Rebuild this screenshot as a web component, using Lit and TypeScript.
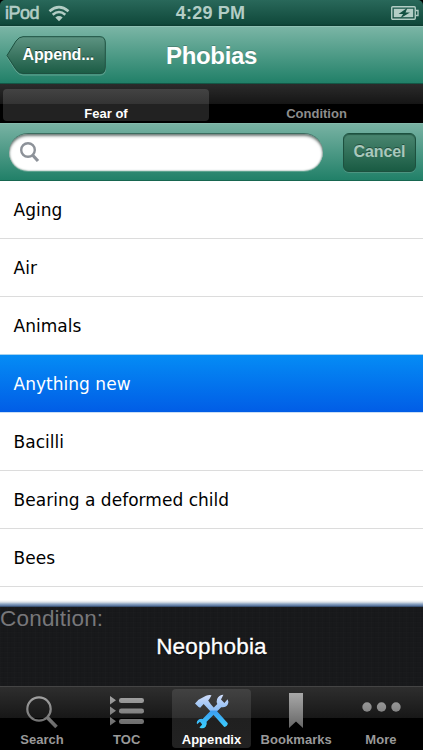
import { LitElement, html, css, svg } from "lit";
import { customElement, property } from "lit/decorators.js";
import { classMap } from "lit/directives/class-map.js";

@customElement("status-bar")
class StatusBar extends LitElement {
  static styles = css`
    :host { display: grid; grid-template-columns: 1fr auto 1fr; align-items: center; height: 26px; box-sizing: border-box;
      padding: 0 4px 0 5px; color: #b3cdc5; background: linear-gradient(#29685a, #10493b 92%, #0b3a2f);
      font: bold 18px/26px "Liberation Sans", sans-serif; }
    .left { display: flex; align-items: center; gap: 9px; }
    .device { letter-spacing: -0.5px; font-weight: normal; -webkit-text-stroke: 0.6px #b3cdc5; }
    .time { letter-spacing: 0.2px; margin-right: 3px; }
    .right { display: flex; justify-content: flex-end; }
    svg { display: block; }
  `;
  render() {
    return html`
      <div class="left"><span class="device">iPod</span>
        <svg width="22" height="18" viewBox="0 0 22 18" fill="none" stroke="#b3cdc5" stroke-width="2.6">
          <path d="M1.5 7.2Q11-.8 20.5 7.2M4.7 10.8Q11 5.2 17.3 10.8" />
          <path d="M11 17.2L7.3 13.4Q11 10.5 14.7 13.4Z" fill="#b3cdc5" stroke="none" />
        </svg>
      </div>
      <div class="time">4:29 PM</div>
      <div class="right">
        <svg width="28" height="15" viewBox="0 0 28 15">
          <rect x=".75" y=".75" width="23.5" height="12.5" rx="1" fill="none" stroke="#b3cdc5" stroke-width="1.4" />
          <path d="M25 4.5h2v5h-2" fill="none" stroke="#b3cdc5" stroke-width="1.3" />
          <rect x="2.8" y="2.8" width="19.4" height="8.4" fill="#b3cdc5" />
          <path d="M16.5 1.8L7.5 8h4.6l-2.8 4.3L19 6.4h-4.5Z" fill="#145042" />
        </svg>
      </div>`;
  }
}

@customElement("nav-header")
class NavHeader extends LitElement {
  static styles = css`
    :host { display: grid; grid-template-columns: 100px 1fr 100px; height: 58px; box-sizing: border-box; padding: 9px 6px 0 6px;
      background: linear-gradient(#7ab5a5, #218068); border-top: 1px solid #8fc2b4; border-bottom: 1px solid #145746;
      font-family: "Liberation Sans", sans-serif; font-weight: bold; color: #fff; }
    .back { display: grid; width: 100px; height: 40px; }
    .back > * { grid-area: 1 / 1; }
    .label { font-size: 16px; line-height: 38px; padding-left: 16.5px; letter-spacing: -0.15px; text-shadow: 0 -1px 0 #183e31; white-space: nowrap; }
    .title { text-align: center; font-size: 24px; line-height: 40px; letter-spacing: -0.35px; text-shadow: 0 -1px 0 #4c8476; }
  `;
  render() {
    return html`
      <div class="back">
        <svg width="101" height="40" viewBox="0 0 101 40">
          <defs><linearGradient id="g" x2="0" y2="1"><stop stop-color="#5d9482" /><stop offset=".5" stop-color="#3c7662" /><stop offset="1" stop-color="#1b5c45" /></linearGradient></defs>
          <path d="M17 2H94Q99.5 2 99.5 8V33Q99.5 39 94 39H17Q13 39 10 35L1 21L10 6Q13 2 17 2Z" fill="none" stroke="#65a391" />
          <path d="M17 .7H94Q99.3 .7 99.3 7V31Q99.3 37.5 94 37.5H17Q13 37.5 10 33.5L1 19.5L10 5Q13 .7 17 .7Z" fill="url(#g)" stroke="#1d5140" />
        </svg>
        <span class="label">Append...</span>
      </div>
      <div class="title">Phobias</div>`;
  }
}

@customElement("scope-bar")
class ScopeBar extends LitElement {
  static styles = css`
    :host { display: grid; grid-template-columns: 206px 1fr; gap: 3px; height: 39px; box-sizing: border-box; padding: 5px 2px 3px 3px;
      background: linear-gradient(#2b2b2b 0, #151515 20px, #000 20px);
      font: bold 13px/15px "Liberation Sans", sans-serif; letter-spacing: 0; color: #8d8d8d; text-align: center; }
    .seg { padding-top: 16.5px; border-radius: 4px; }
    .on { color: #fff; background: linear-gradient(#434343 0, #343434 15px, #222 15px, #222); }
  `;
  render() {
    return html`<div class="seg on">Fear of</div><div class="seg">Condition</div>`;
  }
}

@customElement("search-strip")
class SearchStrip extends LitElement {
  static styles = css`
    :host { display: flex; justify-content: space-between; height: 58px; box-sizing: border-box; padding: 9px 7px 0 9px;
      border-top: 1px solid #84b9ab; border-bottom: 1px solid #176650;
      background: linear-gradient(#78b2a3, #218068); font-family: "Liberation Sans", sans-serif; }
    .field { width: 314px; height: 38px; box-sizing: border-box; border-radius: 19px; background: #fff; padding: 8px 11px;
      box-shadow: inset 0 2px 3px #707b78, inset 0 0 2px #6d9186, 0 1px 0 #5ca28e; border-top: 1px solid #3c6d60; }
    .cancel { width: 73px; height: 39px; box-sizing: border-box; border-radius: 6px; border: 1px solid #1d513f; text-align: center;
      background: linear-gradient(#4a8670, #195b43); color: #a9c8bc; font-weight: bold; font-size: 16px; line-height: 36px;
      letter-spacing: -0.1px; text-shadow: 0 -1px 0 #24503f; box-shadow: inset 0 1px 1px #285c4a, 0 1px 0 #4c9480; }
    svg { display: block; }
  `;
  render() {
    return html`
      <div class="field"><svg width="20" height="21" viewBox="0 0 20 21" fill="none" stroke="#8d9299" stroke-width="2.4"><circle cx="8" cy="8" r="6.8" /><path d="M12.5 13L18 19" stroke-width="3.2" /></svg></div>
      <div class="cancel">Cancel</div>`;
  }
}

@customElement("phobia-list")
class PhobiaList extends LitElement {
  static styles = css`
    :host { display: block; height: 426px; overflow: hidden; background: #fff;
      font-family: "DejaVu Sans", sans-serif; font-size: 17px; color: #000; }
    .row { height: 58px; box-sizing: border-box; padding-left: 13.5px; line-height: 59px; border-bottom: 1px solid #dcdcdc; letter-spacing: 0.03px; }
    .before { border-bottom-color: #a4d2ef; }
    .selected { color: #fff; background: linear-gradient(#058cf5, #015de6); border-bottom-color: #c9def5; }
    .shade { height: 20px; background: linear-gradient(#fff 0, #fff 13px, #dfe4e9 15px, #8da5c3 17px, #526f98 19px, #263a55 20px); }
  `;
  render() {
    const rows = ["Aging", "Air", "Animals", "Anything new", "Bacilli", "Bearing a deformed child", "Bees"];
    return html`${rows.map((r, i) => html`<div class=${classMap({ row: true, before: i === 2, selected: i === 3 })}>${r}</div>`)}<div class="shade"></div>`;
  }
}

@customElement("condition-panel")
class ConditionPanel extends LitElement {
  static styles = css`
    :host { display: block; height: 79px; font: 22.5px/24px "Liberation Sans", sans-serif; color: #fff;
      background: repeating-linear-gradient(90deg, #ffffff02 0 1px, transparent 1px 3px, #0000000c 3px 4px, transparent 4px 7px),
        repeating-linear-gradient(#ffffff02 0 1px, transparent 1px 4px, #0000000c 4px 5px), #18191b; }
    .caption { color: #77777a; height: 28px; letter-spacing: 0.2px; }
    .answer { text-align: center; text-shadow: 0 1px 1px #000; letter-spacing: 0.2px; -webkit-text-stroke: 0.3px #fff; }
  `;
  render() {
    return html`<div class="caption">Condition:</div><div class="answer">Neophobia</div>`;
  }
}

const grey = svg`<defs><linearGradient id="m" gradientUnits="userSpaceOnUse" x2="0" y2="36"><stop stop-color="#aaa" /><stop offset="1" stop-color="#666" /></linearGradient>
  <linearGradient id="b" gradientUnits="userSpaceOnUse" x2="0" y2="36"><stop stop-color="#dce2fb" /><stop offset=".5" stop-color="#8cbdf4" /><stop offset=".53" stop-color="#3d9ef0" /><stop offset="1" stop-color="#3bd0ff" /></linearGradient></defs>`;
const icons = {
  search: svg`<g fill="none" stroke="url(#m)"><circle cx="19" cy="17" r="11.7" stroke-width="2.2" /><path d="M27.3 25.5L36.5 35" stroke-width="3.6" /></g>`,
  toc: svg`<g fill="url(#m)"><path d="M5 4L11 8.2L5 12.4ZM5 14.5L11 18.7L5 22.9ZM5 25L11 29.2L5 33.4Z" /><rect x="14" y="6" width="25" height="5" rx="2.3" /><rect x="14" y="16.6" width="25" height="5" rx="2.3" /><rect x="14" y="27" width="25" height="5" rx="2.3" /></g>`,
  tools: svg`<g fill="url(#b)">
    <path d="M5 11.5L8.5 7.7L16 3.8Q18.5 2.6 21.5 3.2L19.6 6.8L18.2 8.6L21 12.5L37.8 31.2Q37.5 34.4 34.3 34.9L17.6 16.2L13.6 12L10.2 15.8L8.6 15Z" />
    <path d="M33.4 2.8Q28.7 3 27.1 7Q26.1 10 27.3 12L12.6 27Q9.4 26.2 7.2 29Q6.4 30.5 7 32.2L10 29.8L12.2 32.4L9.4 35.4Q13 37.4 15.6 34.7Q17.4 32.5 16.6 29.8L31.2 15.2Q36 16 38 12.1Q38.8 9.4 37.6 7.2L34.4 10.9L31 7.6Z" /></g>`,
  bookmark: svg`<path d="M15 1H29V36L22 29.5L15 36Z" fill="url(#m)" />`,
  more: svg`<g fill="url(#m)"><circle cx="8" cy="15" r="4.7" /><circle cx="22.5" cy="15" r="4.7" /><circle cx="37" cy="15" r="4.7" /></g>`,
};

@customElement("tab-item")
class TabItem extends LitElement {
  @property() icon: keyof typeof icons = "search";
  @property() label = "";
  @property({ type: Boolean }) active = false;
  static styles = css`
    :host { display: block; min-width: 0; }
    .tab { height: 59px; border-radius: 4px; padding-top: 3px; box-sizing: border-box; text-align: center; white-space: nowrap;
      color: #999; font: bold 13px/16px "Liberation Sans", sans-serif; letter-spacing: 0.05px; }
    .active { color: #fff; background: linear-gradient(#424242, #2f2f2f 29px, #202020 29px, #222); }
    svg { display: block; margin: 0 auto 2px; }
  `;
  render() {
    return html`<div class=${classMap({ tab: true, active: this.active })}><svg width="44" height="38" viewBox="0 0 44 38">${grey}${icons[this.icon]}</svg>${this.label}</div>`;
  }
}

@customElement("app-root")
class AppRoot extends LitElement {
  static styles = css`
    :host { display: flex; flex-direction: column; width: 423px; height: 750px; overflow: hidden; background: #000; }
    status-bar { border-radius: 5px 5px 0 0; }
    .tabs { display: grid; grid-template-columns: repeat(5, 79px); justify-content: space-between; height: 64px; box-sizing: border-box;
      padding: 2px 2.5px 0; border-top: 1px solid #444; background: linear-gradient(#2e2e2e 0, #171717 31px, #000 31px); }
  `;
  render() {
    return html`
      <status-bar></status-bar><nav-header></nav-header><scope-bar></scope-bar><search-strip></search-strip>
      <phobia-list></phobia-list><condition-panel></condition-panel>
      <div class="tabs">
        <tab-item icon="search" label="Search"></tab-item>
        <tab-item icon="toc" label="TOC"></tab-item>
        <tab-item icon="tools" label="Appendix" active></tab-item>
        <tab-item icon="bookmark" label="Bookmarks"></tab-item>
        <tab-item icon="more" label="More"></tab-item>
      </div>`;
  }
}
